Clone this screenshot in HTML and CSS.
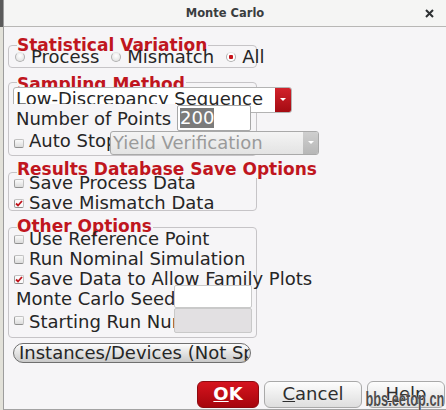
FILE: index.html
```html
<!DOCTYPE html>
<html>
<head>
	<link rel="stylesheet" href="styles.css">
</head>
<body>
	<div class="dialog">
		<header class="titlebar">
			<span class="title">Monte Carlo</span>
			<svg class="close" width="9" height="9" viewBox="0 0 9 9">
				<path d="M1 1 L8 8 M8 1 L1 8" stroke="#2e3133" stroke-width="2"/>
			</svg>
		</header>

		<main class="content">
			<section class="group group-stat">
				<h2 class="group-title">Statistical Variation</h2>
				<div class="group-box">
					<div class="radios">
						<label class="radio-item"><span class="radio"></span>Process</label>
						<label class="radio-item"><span class="radio"></span>Mismatch</label>
						<label class="radio-item"><span class="radio on"></span>All</label>
					</div>
				</div>
			</section>

			<section class="group group-sampling">
				<h2 class="group-title">Sampling Method</h2>
				<div class="group-box">
					<div class="combo combo-method">
						<span class="combo-text">Low-Discrepancy Sequence</span>
						<span class="combo-btn"><svg width="6" height="4" viewBox="0 0 6 4"><path d="M0 0 H6 L3 3 Z" fill="#fff"/></svg></span>
					</div>
					<div class="points-row">
						<span class="points-label">Number of Points</span>
						<span class="field points-field"><span class="selected">200</span></span>
					</div>
					<div class="auto-row">
						<label class="check-label"><span class="check"></span>Auto Stop</label>
						<div class="combo combo-yield">
							<span class="combo-text">Yield Verification</span>
							<span class="combo-btn"><svg width="6" height="4" viewBox="0 0 6 4"><path d="M0 0 H6 L3 3 Z" fill="#fff"/></svg></span>
						</div>
					</div>
				</div>
			</section>

			<section class="group group-results">
				<h2 class="group-title">Results Database Save Options</h2>
				<div class="group-box">
					<label class="check-row"><span class="check"></span>Save Process Data</label>
					<label class="check-row"><span class="check checked"><svg width="8" height="7" viewBox="0 0 8 7"><path d="M1 3.5 L3 5.5 L7 1" stroke="#c0141c" stroke-width="1.8" fill="none"/></svg></span>Save Mismatch Data</label>
				</div>
			</section>

			<section class="group group-other">
				<h2 class="group-title">Other Options</h2>
				<div class="group-box">
					<label class="check-row"><span class="check"></span>Use Reference Point</label>
					<label class="check-row"><span class="check"></span>Run Nominal Simulation</label>
					<label class="check-row"><span class="check checked"><svg width="8" height="7" viewBox="0 0 8 7"><path d="M1 3.5 L3 5.5 L7 1" stroke="#c0141c" stroke-width="1.8" fill="none"/></svg></span>Save Data to Allow Family Plots</label>
					<div class="field-row seed-row">
						<span class="field-label">Monte Carlo Seed</span>
						<span class="field seed-field"></span>
					</div>
					<div class="field-row run-row">
						<label class="field-label"><span class="check"></span>Starting Run Number</label>
						<span class="field run-field"></span>
					</div>
				</div>
			</section>

			<button class="pill">Instances/Devices (Not Specified)</button>

			<div class="actions">
				<button class="btn btn-ok"><u>O</u>K</button>
				<button class="btn btn-cancel"><u>C</u>ancel</button>
				<button class="btn btn-help"><u>H</u>elp</button>
			</div>
		</main>

		<span class="watermark">bbs.eetop.cn</span>
	</div>
</body>
</html>
```

FILE: styles.css
```css
* {
	box-sizing: border-box;
}

body {
	margin: 0;
	width: 446px;
	height: 410px;
	overflow: hidden;
	background: linear-gradient(#5b5b5b 0 27px, #e2e1d9 27px);
	font-family: "DejaVu Sans", sans-serif;
	color: #262626;
}

.dialog {
	position: relative;
	margin-left: 3px;
	height: 410px;
	background: #f6f5f7;
	border-left: 1px solid #9d9d9d;
	border-bottom: 1px solid #a3a3a3;
}

.titlebar {
	display: grid;
	grid-template-columns: 1fr auto 1fr;
	align-items: center;
	height: 27px;
	background: #f5f5f4;
	border-bottom: 1px solid #b8b7b5;
}

.title {
	grid-column: 2;
	font-size: 11.5px;
	font-weight: bold;
	color: #3a3d3f;
}

.close {
	grid-column: 3;
	justify-self: end;
	margin-right: 12px;
}

.content {
	padding-left: 4px;
	font-size: 18px;
	line-height: 20px;
}

/* group boxes */

.group-title {
	position: relative;
	width: fit-content;
	margin: 0 0 0 9px;
	padding-right: 1px;
	background: #f6f5f7;
	color: #c0161e;
	font-size: 17px;
	line-height: 17px;
	font-weight: bold;
	white-space: nowrap;
}

.group-box {
	width: 249px;
	border: 1px solid #c6c4c7;
	border-radius: 4px;
}

.group-box > * {
	position: relative;
}

.group-stat {
	margin-top: 10px;
}

.group-stat .group-box {
	margin-top: -9px;
	padding-top: 1px;
}

.group-sampling {
	margin-top: 8px;
}

.group-sampling .group-box {
	margin-top: -11px;
}

.group-results {
	margin-top: 5px;
}

.group-results .group-box {
	margin-top: -6px;
	height: 39px;
}

.group-other {
	margin-top: 7px;
}

.group-other .group-box {
	margin-top: -8px;
	padding: 1px 0 4px;
}

/* radios and checks */

.radios {
	display: flex;
	gap: 12px;
	padding-left: 6px;
}

.radio-item {
	display: flex;
	flex: none;
	white-space: nowrap;
}

.radio {
	width: 10px;
	height: 10px;
	margin: 5px 6px 0 0;
	border-radius: 50%;
	border: 1px solid #b0b0b0;
	border-top-color: #e4e4e4;
	background: radial-gradient(circle at 50% 35%, #fff, #dcdcdc);
}

.radio.on {
	background: radial-gradient(circle, #c8141c 0 2px, #fff 2.5px);
}

.check {
	display: flex;
	align-items: center;
	justify-content: center;
	flex: none;
	width: 10px;
	height: 9px;
	margin: 6px 5px 0 0;
	border: 1px solid #c2c2c2;
	border-bottom-color: #8f8f8f;
	border-left-color: #9d9d9d;
	border-radius: 2px;
	background: linear-gradient(#fafafa, #dcdcdc);
}

.check.checked {
	background: #fbfbfb;
}

.check-row {
	display: flex;
	margin-left: 5px;
	white-space: nowrap;
}

/* combos and fields */

.combo {
	display: flex;
	flex: none;
	border: 1px solid #b3b3b3;
	border-radius: 3px;
	overflow: hidden;
}

.combo-text {
	flex: 1;
	overflow: hidden;
	white-space: nowrap;
}

.combo-btn {
	display: flex;
	align-items: center;
	justify-content: center;
	width: 16px;
}

.combo-method {
	width: 279px;
	height: 26px;
	margin: 4px 0 0 4px;
	background: #fff;
}

.combo-method .combo-text {
	padding-left: 2px;
	line-height: 22px;
}

.combo-method .combo-btn {
	background: linear-gradient(#d2222b, #a40b12);
}

.points-row {
	display: flex;
	height: 27px;
	margin: -9px 0 0 4px;
}

.points-label {
	flex: none;
	width: 164px;
	padding: 5px 0 0 3px;
	background: #f6f5f7;
	white-space: nowrap;
	overflow: hidden;
}

.field {
	display: block;
	flex: none;
	width: 78px;
	border: 1px solid #c9c9c9;
	border-radius: 2px;
	background: #fff;
}

.points-field {
	width: 74px;
	height: 26px;
	margin-top: 1px;
	border-color: #a7a7a7;
}

.selected {
	display: inline-block;
	margin: 2px 0 0 2px;
	background: #7b7b7b;
	color: #fff;
}

.auto-row {
	display: flex;
	height: 24px;
	margin-left: 5px;
}

.check-label {
	display: flex;
	flex: none;
	width: 96px;
	overflow: hidden;
	white-space: nowrap;
}

.check-label .check {
	margin-top: 8px;
}

.combo-yield {
	width: 209px;
	height: 24px;
	border-color: #a9a9a9;
	background: linear-gradient(#f4f4f4, #e3e3e3);
	color: #9a9a9a;
}

.combo-yield .combo-text {
	padding: 1px 0 0 2px;
}

.combo-yield .combo-btn {
	width: 15px;
	background: linear-gradient(#cfcfcf, #b7b7b7);
}

.field-row {
	display: flex;
	margin-left: 4px;
}

.field-label {
	display: flex;
	flex: none;
	width: 161px;
	padding: 4px 0 0 3px;
	overflow: hidden;
	white-space: nowrap;
}

.seed-row {
	height: 23px;
	margin-top: -4px;
}

.run-row {
	height: 25px;
}

.run-row .field-label {
	padding-left: 1px;
}

.run-row .check {
	margin-top: 4px;
}

.run-field {
	background: #e2e0e2;
}

/* buttons */

button {
	font-family: inherit;
	font-size: 18px;
	color: inherit;
}

.pill {
	display: block;
	width: 238px;
	height: 20px;
	margin: 5px 0 0 5px;
	padding: 0 0 0 5px;
	border: 1px solid #6f6f6f;
	border-radius: 10px;
	background: linear-gradient(#fdfdfd, #c9c9c9);
	line-height: 18px;
	text-align: left;
	white-space: nowrap;
	overflow: hidden;
}

.actions {
	display: flex;
	justify-content: flex-end;
	gap: 5px;
	margin-top: 18px;
	padding-right: 1px;
}

.btn {
	height: 27px;
	padding: 0 0 2px;
	border: 1px solid #a9a9a9;
	border-radius: 6px;
	background: linear-gradient(#fdfdfd, #dedede);
	line-height: 23px;
	color: #2e2e2e;
}

.btn-ok {
	width: 62px;
	border-color: #8d0a10;
	background: linear-gradient(#d6141e, #a6050d);
	color: #fff;
	font-weight: bold;
}

.btn-cancel {
	width: 98px;
}

.btn-help {
	width: 78px;
}

.watermark {
	position: absolute;
	right: 2px;
	bottom: 0;
	font-family: "Liberation Sans", sans-serif;
	font-size: 20px;
	font-weight: bold;
	line-height: 20px;
	color: #4e4e4e;
	text-shadow: 0 0 1px #fff;
	transform: scaleX(0.64);
	transform-origin: right;
}
```
